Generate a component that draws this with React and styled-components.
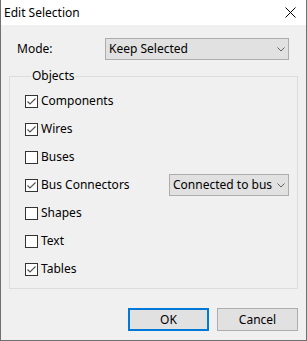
import React from 'react';
import styled, { createGlobalStyle } from 'styled-components';

const Global = createGlobalStyle`
  html, body {
    margin: 0;
    padding: 0;
    background: #f0f0f0;
  }
  body {
    font-family: "Noto Sans", "Open Sans", sans-serif;
    font-size: 12px;
    color: #000;
  }
`;

const Window = styled.div`
  box-sizing: border-box;
  width: 307px;
  height: 341px;
  display: flex;
  flex-direction: column;
  background: #f0f0f0;
  border: 1px solid #707070;
  border-top: none;
`;

const TitleBar = styled.div`
  height: 25px;
  flex: none;
  display: flex;
  align-items: center;
  justify-content: space-between;
  background: #fff;
  padding: 0 10px 0 3px;
`;

const Title = styled.span`
  font-size: 12px;
  line-height: 16px;
`;

const Body = styled.div`
  display: flex;
  flex-direction: column;
  padding: 13px 16px 0 8px;
`;

const ModeRow = styled.div`
  display: flex;
  align-items: center;
  height: 22px;
  padding-left: 8px;
`;

const Label = styled.span`
  width: ${({ $w }) => ($w ? `${$w}px` : 'auto')};
  flex: none;
  line-height: 16px;
  white-space: nowrap;
`;

const Combo = styled.div`
  box-sizing: border-box;
  width: ${({ $w }) => $w}px;
  height: 22px;
  display: flex;
  align-items: center;
  background: #e1e1e1;
  border: 1px solid #adadad;
  padding: 0 3px 0 3px;
`;

const ComboText = styled.span`
  flex: 1;
  overflow: hidden;
  white-space: nowrap;
  line-height: 16px;
  margin-right: 2px;
`;

const Group = styled.fieldset`
  box-sizing: border-box;
  width: 289px;
  margin: 8px 0 0 0;
  padding: 3px 7px 5px 15px;
  border: 1px solid #dcdcdc;
  min-width: 0;
`;

const Legend = styled.legend`
  padding: 0 1px;
  margin-left: 6px;
  line-height: 16px;
`;

const Row = styled.div`
  display: flex;
  align-items: center;
  height: 28px;
`;

const Box = styled.span`
  box-sizing: border-box;
  width: 13px;
  height: 13px;
  flex: none;
  background: #fff;
  border: 1px solid #333;
  margin-right: 3px;
  display: flex;
  align-items: center;
  justify-content: center;
`;

const Buttons = styled.div`
  display: flex;
  justify-content: flex-end;
  gap: 8px;
  margin-top: 19px;
  margin-right: -8px;
`;

const Button = styled.div`
  box-sizing: border-box;
  width: 81px;
  height: 23px;
  display: flex;
  align-items: center;
  justify-content: center;
  background: #e1e1e1;
  border: ${({ $focus }) => ($focus ? '2px solid #0078d7' : '1px solid #adadad')};
`;

const Chevron = () => (
  <svg width="8" height="5" viewBox="0 0 8 5" style={{ flex: 'none' }}>
    <polyline points="0.5,0.5 4,4 7.5,0.5" fill="none" stroke="#606060" strokeWidth="1" />
  </svg>
);

const Close = () => (
  <svg width="11" height="11" viewBox="0 0 11 11">
    <path d="M0.5 0.5 L10.5 10.5 M10.5 0.5 L0.5 10.5" stroke="#000" strokeWidth="1" />
  </svg>
);

const Check = ({ on }) => (
  <Box>
    {on && (
      <svg width="11" height="11" viewBox="0 0 11 11">
        <polyline points="1.5,5.5 4,8 9.5,2.5" fill="none" stroke="#555" strokeWidth="1.2" />
      </svg>
    )}
  </Box>
);

const items = [
  { name: 'Components', on: true },
  { name: 'Wires', on: true },
  { name: 'Buses', on: false },
  { name: 'Bus Connectors', on: true, combo: 'Connected to bus' },
  { name: 'Shapes', on: false },
  { name: 'Text', on: false },
  { name: 'Tables', on: true },
];

export default function App() {
  return (
    <>
      <Global />
      <Window>
        <TitleBar>
          <Title>Edit Selection</Title>
          <Close />
        </TitleBar>
        <Body>
          <ModeRow>
            <Label $w={88}>Mode:</Label>
            <Combo $w={184}>
              <ComboText>Keep Selected</ComboText>
              <Chevron />
            </Combo>
          </ModeRow>
          <Group>
            <Legend>Objects</Legend>
            {items.map((it) => (
              <Row key={it.name}>
                <Check on={it.on} />
                {it.combo ? (
                  <>
                    <Label $w={128}>{it.name}</Label>
                    <Combo $w={120}>
                      <ComboText>{it.combo}</ComboText>
                      <Chevron />
                    </Combo>
                  </>
                ) : (
                  <Label>{it.name}</Label>
                )}
              </Row>
            ))}
          </Group>
          <Buttons>
            <Button $focus>OK</Button>
            <Button>Cancel</Button>
          </Buttons>
        </Body>
      </Window>
    </>
  );
}
